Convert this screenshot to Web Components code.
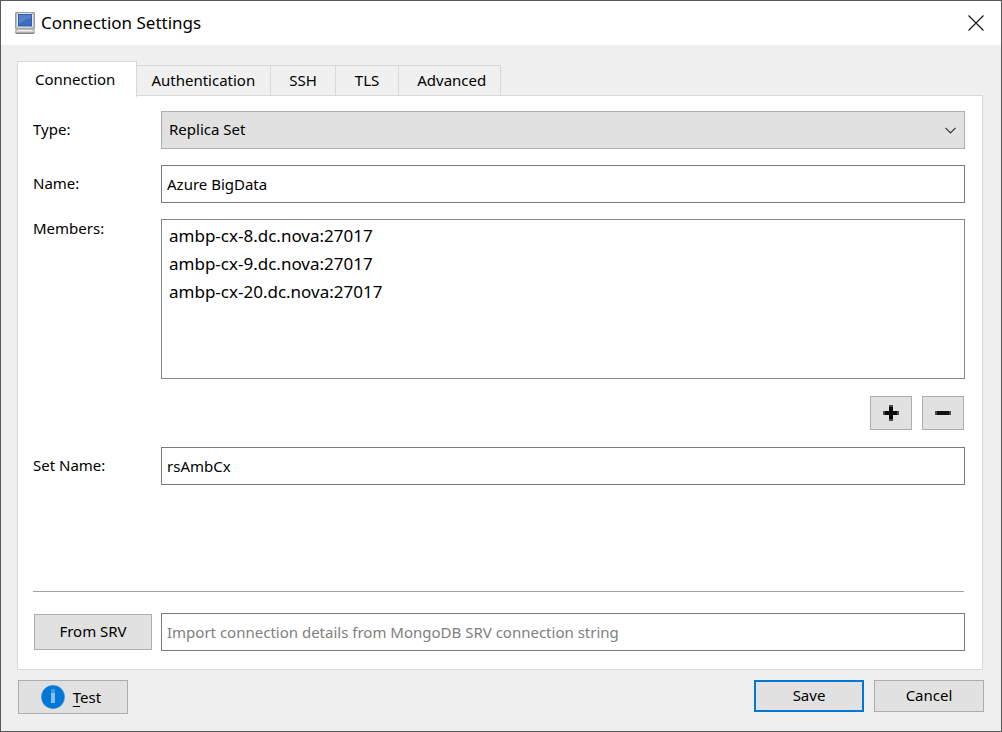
<!DOCTYPE html>
<html lang="en">
<head>
<meta charset="utf-8">
<title>Connection Settings</title>
<style>
  html, body { height: 100%; margin: 0; }
  body {
    font: 15px/20px "Noto Sans", "Open Sans", sans-serif;
    color: #000;
    --face: #e1e1e1;
    --edge: #adadad;
    --accent: #0078d7;
  }
</style>
</head>
<body>
<settings-dialog></settings-dialog>

<template id="dialog-window">
  <style>
    :host {
      display: flex; flex-direction: column; box-sizing: border-box;
      min-height: 100%; border: 1px solid #585858; background: #efefef;
    }
    header {
      display: flex; align-items: center; gap: 6px; height: 44px;
      padding: 0 9px 0 14px; background: #fff;
    }
    header > svg { width: 20px; height: 22px; flex: none; }
    h1 { flex: 1; margin: 0; font-size: 17px; line-height: 24px; font-weight: 400; }
    .close {
      display: grid; place-items: center; width: 32px; height: 32px;
      padding: 0; border: 0; background: none;
    }
    main { flex: 1; display: flex; flex-direction: column; padding: 16px 18px 0 16px; }
    footer { padding: 10px 17px 17px; }
  </style>
  <header>
    <svg viewBox="0 0 20 22" aria-hidden="true">
      <rect x="0.5" y="0.5" width="19" height="16.5" rx="0.5" fill="#bcbcba" stroke="#9c9c9a"/>
      <rect x="2.5" y="1.5" width="15" height="13.5" rx="1" fill="#2f5cae" stroke="#e4e8f2"/>
      <rect x="4" y="3" width="12" height="10.5" fill="#3c6cbf"/>
      <path d="M4 3h12v3C11 7 8 9 4 12z" fill="#5580ca"/>
      <path d="M1.5 17h17l1 2.5v1.5H.5v-1.5z" fill="#d4d4d2" stroke="#a0a09e"/>
      <path d="M1 21.3h18" stroke="#73736f"/>
      <path d="M3 18.5h14" stroke="#efefed"/>
    </svg>
    <h1><slot name="title"></slot></h1>
    <button class="close" type="button" aria-label="Close">
      <svg width="16" height="16" viewBox="0 0 16 16"><path d="M.5.5l15 15M15.5.5l-15 15" stroke="#111" stroke-width="1.1"/></svg>
    </button>
  </header>
  <main><slot></slot></main>
  <footer><slot name="footer"></slot></footer>
</template>

<template id="tab-panel">
  <style>
    :host { flex: 1; display: flex; flex-direction: column; }
    nav { display: flex; align-items: flex-end; position: relative; }
    button {
      font: inherit; color: inherit; height: 31px; margin: 0 0 -1px; padding: 0 18px 2px;
      border: 1px solid #d9d9d9; border-left: 0; background: #f0f0f0;
    }
    button:nth-child(2) { padding: 0 15px 2px 14px; }
    button:nth-child(4) { padding: 0 19px 2px; }
    button:nth-child(5) { padding: 0 14px 2px 18px; }
    button[aria-selected="true"] {
      height: 36px; padding: 0 21px 2px 17px; margin-bottom: -2px;
      border-left: 1px solid #d9d9d9; border-bottom: 0; background: #fff;
    }
    section {
      flex: 1; display: flex; flex-direction: column; gap: 16px;
      padding: 15px 17px 18px 15px; border: 1px solid #d9d9d9; background: #fff;
    }
  </style>
  <nav role="tablist"></nav>
  <section role="tabpanel"><slot></slot></section>
</template>

<template id="form-row">
  <style>
    :host { display: grid; grid-template-columns: 128px 1fr; align-items: center; }
    :host([kind="list"]) { align-items: start; }
    label { line-height: 18px; padding-bottom: 2px; }
    .box { display: grid; align-items: center; position: relative; }
    input, select {
      box-sizing: border-box; width: 100%; height: 38px; margin: 0;
      font: inherit; color: inherit; border: 1px solid #7a7a7a;
      border-radius: 0; background: #fff; outline: 0; padding: 0 5px;
    }
    input::placeholder { color: #808080; opacity: 1; }
    select { appearance: none; padding: 0 7px 2px; border-color: var(--edge); background: var(--face); }
    select[multiple] {
      height: 160px; padding: 4px 0 0; overflow: auto;
      border-color: #828790; background: #fff; font-size: 17px;
    }
    select[multiple] option { padding: 0 7px; line-height: 28px; min-height: 28px; }
    svg { position: absolute; right: 9px; pointer-events: none; }
  </style>
  <slot name="lead"><label for="field"></label></slot>
  <div class="box"></div>
</template>

<template id="push-button">
  <style>
    :host { display: inline-flex; width: 110px; height: 32px; }
    button {
      flex: 1; display: flex; align-items: center; justify-content: center; gap: 8px;
      font: inherit; color: inherit; padding: 0; border: 1px solid var(--edge);
      border-radius: 0; background: var(--face);
    }
    button { padding: var(--inset, 0 0 2px); }
    :host([primary]) button { border: 2px solid var(--accent); }
  </style>
  <button type="button"><slot></slot></button>
</template>

<template id="settings-dialog">
  <style>
    :host { display: flex; flex-direction: column; min-height: 100%; }
    dialog-window { flex: 1; }
    .tools { display: flex; justify-content: flex-end; gap: 10px; padding: 1px 1px 1px 0; }
    .tools push-button { width: 42px; height: 34px; --inset: 0; }
    .end { margin-top: auto; border-top: 1px solid #a0a0a0; padding-top: 21px; margin-right: 1px; }
    .end form-row { margin-right: -1px; }
    .end push-button { width: 118px; height: 36px; margin-left: 1px; }
    .actions { display: flex; align-items: flex-start; gap: 10px; }
    .test { margin-right: auto; height: 34px; --inset: 0 4px 0 0; }
    u { text-underline-offset: 3px; text-decoration-thickness: 1px; }
  </style>
  <dialog-window>
    <span slot="title">Connection Settings</span>
    <tab-panel tabs="Connection|Authentication|SSH|TLS|Advanced">
      <form-row kind="choice" label="Type:" value="Replica Set"></form-row>
      <form-row label="Name:" value="Azure BigData"></form-row>
      <form-row kind="list" label="Members:" value="ambp-cx-8.dc.nova:27017|ambp-cx-9.dc.nova:27017|ambp-cx-20.dc.nova:27017"></form-row>
      <div class="tools">
        <push-button label="Add member"><svg width="16" height="16" viewBox="0 0 16 16"><path d="M6 0h4v6h6v4h-6v6H6v-6H0V6h6z" fill="#4a4a4a"/><path d="M6 2h4v4h4v4h-4v4H6v-4H2V6h4z" fill="#080808"/></svg></push-button>
        <push-button label="Remove member"><svg width="16" height="16" viewBox="0 0 16 16"><path d="M0 6h16v4H0z" fill="#4a4a4a"/><path d="M2 6h12v4H2z" fill="#111"/></svg></push-button>
      </div>
      <form-row label="Set Name:" value="rsAmbCx"></form-row>
      <div class="end">
        <form-row name="SRV connection string" placeholder="Import connection details from MongoDB SRV connection string">
          <push-button slot="lead">From SRV</push-button>
        </form-row>
      </div>
    </tab-panel>
    <div slot="footer" class="actions">
      <push-button class="test">
        <svg width="24" height="24" viewBox="0 0 24 24"><circle cx="12" cy="12" r="11.9" fill="#5c9bd0"/><circle cx="12" cy="12" r="11.2" fill="#0078d7"/><path d="M10 4h4v4h-4z" fill="#3f98e1"/><path d="M10 8h4v10h-4z" fill="#8bc0ee"/></svg>
        <span><u>T</u>est</span>
      </push-button>
      <push-button primary>Save</push-button>
      <push-button>Cancel</push-button>
    </div>
  </dialog-window>
</template>

<script>
  class Base extends HTMLElement {
    constructor() {
      super();
      const view = document.getElementById(this.localName);
      this.attachShadow({ mode: "open" }).append(view.content.cloneNode(true));
    }
  }

  class DialogWindow extends Base {}

  class TabPanel extends Base {
    connectedCallback() {
      const nav = this.shadowRoot.querySelector("nav");
      nav.replaceChildren(...this.getAttribute("tabs").split("|").map((text, i) => {
        const tab = document.createElement("button");
        tab.type = "button";
        tab.setAttribute("role", "tab");
        tab.setAttribute("aria-selected", i === 0);
        tab.textContent = text;
        return tab;
      }));
    }
  }

  class FormRow extends Base {
    connectedCallback() {
      const kind = this.getAttribute("kind");
      const value = this.getAttribute("value") || "";
      const box = this.shadowRoot.querySelector(".box");
      this.shadowRoot.querySelector("label").textContent = this.getAttribute("label") || this.getAttribute("name");
      const field = document.createElement(kind ? "select" : "input");
      field.id = "field";
      if (kind) {
        field.multiple = kind === "list";
        field.append(...value.split("|").map(text => new Option(text)));
      } else {
        field.type = "text";
        field.value = value;
        field.placeholder = this.getAttribute("placeholder") || "";
      }
      if (this.hasAttribute("name")) field.setAttribute("aria-label", this.getAttribute("name"));
      box.replaceChildren(field);
      if (kind === "choice") {
        box.insertAdjacentHTML("beforeend",
          '<svg width="11" height="7" viewBox="0 0 11 7"><path d="M.5.8l5 5 5-5" fill="none" stroke="#333" stroke-width="1.2"/></svg>');
      }
    }
  }

  class PushButton extends Base {
    connectedCallback() {
      if (this.hasAttribute("label")) {
        this.shadowRoot.querySelector("button").setAttribute("aria-label", this.getAttribute("label"));
      }
    }
  }

  class SettingsDialog extends Base {}

  customElements.define("dialog-window", DialogWindow);
  customElements.define("tab-panel", TabPanel);
  customElements.define("form-row", FormRow);
  customElements.define("push-button", PushButton);
  customElements.define("settings-dialog", SettingsDialog);
</script>
</body>
</html>
